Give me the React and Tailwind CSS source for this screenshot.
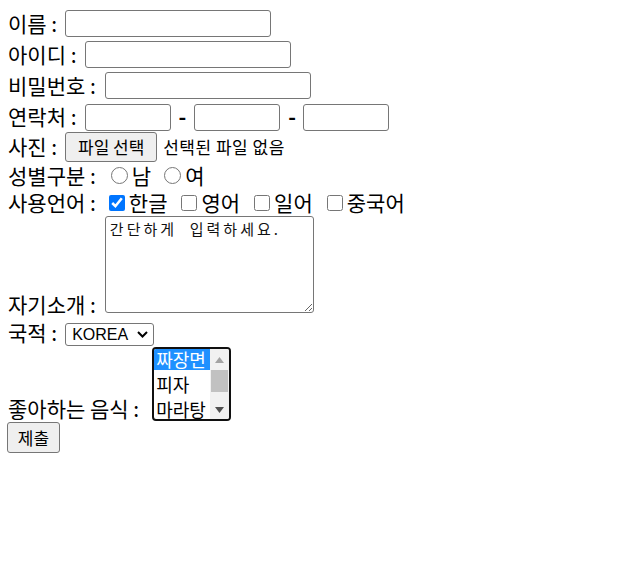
import React from 'react';

const label = { fontFamily: '"Noto Sans CJK KR", sans-serif' };

function TextBox({ className = '' }) {
  return <input type="text" className={`h-[27px] border border-[#767676] rounded-[3px] bg-white px-1 ${className}`} />;
}

function Radio({ name, text, className = '' }) {
  return (
    <span className={`flex items-center ${className}`}>
      <input type="radio" name={name} className="mr-[4px] w-[17px] h-[17px] m-0 shrink-0" />
      <span>{text}</span>
    </span>
  );
}

function Check({ text, checked, className = '' }) {
  return (
    <span className={`flex items-center ${className}`}>
      <input type="checkbox" defaultChecked={checked} className="mr-[4px] w-[16px] h-[16px] m-0 shrink-0" />
      <span>{text}</span>
    </span>
  );
}

function FoodList() {
  const foods = ['짜장면', '피자', '마라탕'];
  return (
    <div className="ml-[13px] w-[79px] h-[74px] border-2 border-[#101010] rounded-[4px] bg-white flex overflow-hidden text-[18px] text-black">
      <div className="flex-1 flex flex-col">
        {foods.map((f, i) => (
          <div key={f} className={`h-[21px] leading-[21px] mb-[4px] pl-[2px] whitespace-nowrap ${i === 0 ? 'bg-[#1e90ff] text-white' : ''}`}>{f}</div>
        ))}
      </div>
      <div className="w-[19px] shrink-0 bg-[#f1f1f1] flex flex-col items-center">
        <div className="h-[21px] flex items-center justify-center">
          <svg width="9" height="6" viewBox="0 0 9 6"><path d="M4.5 0 L9 6 L0 6 Z" fill="#a3a3a3" /></svg>
        </div>
        <div className="w-[17px] h-[22px] bg-[#c1c1c1]" />
        <div className="flex-1 flex items-end justify-center pb-[6px]">
          <svg width="9" height="6" viewBox="0 0 9 6"><path d="M0 0 L9 0 L4.5 6 Z" fill="#505050" /></svg>
        </div>
      </div>
    </div>
  );
}

export default function App() {
  return (
    <form className="pt-2 pl-2 text-[21px] leading-[27px] text-black bg-white w-[628px] h-[573px]" style={label} onSubmit={(e) => e.preventDefault()}>
      <div className="flex items-center h-[31px]">
        <span>이름 :</span>
        <TextBox className="ml-[8px] w-[206px]" />
      </div>
      <div className="flex items-center h-[31px]">
        <span>아이디 :</span>
        <TextBox className="ml-[8px] w-[206px]" />
      </div>
      <div className="flex items-center h-[31px]">
        <span>비밀번호 :</span>
        <TextBox className="ml-[9px] w-[206px]" />
      </div>
      <div className="flex items-start h-[30px]">
        <span className="mt-[2px]">연락처 :</span>
        <TextBox className="ml-[8px] w-[86px] mt-[3px]" />
        <span className="mx-[8px] font-bold mt-[2px]">-</span>
        <TextBox className="w-[86px] mt-[3px]" />
        <span className="ml-[8px] mr-[7px] font-bold mt-[2px]">-</span>
        <TextBox className="w-[86px] mt-[3px]" />
      </div>
      <div className="flex items-center h-[31px]">
        <span>사진 :</span>
        <button type="button" className="ml-[8px] w-[92px] h-[30px] bg-[#efefef] border border-[#767676] rounded-[3px] text-[17px] leading-[20px]">파일 선택</button>
        <span className="ml-[6px] text-[17px] tracking-[0.5px]">선택된 파일 없음</span>
      </div>
      <div className="flex items-center h-[27px]">
        <span>성별구분 :</span>
        <Radio name="gender" text="남" className="ml-[15px]" />
        <Radio name="gender" text="여" className="ml-[13px]" />
      </div>
      <div className="flex items-center h-[27px]">
        <span>사용언어 :</span>
        <Check text="한글" checked className="ml-[13px]" />
        <Check text="영어" className="ml-[14px]" />
        <Check text="일어" className="ml-[14px]" />
        <Check text="중국어" className="ml-[14px]" />
      </div>
      <div className="flex h-[102px]">
        <span className="self-end">자기소개 :</span>
        <textarea
          defaultValue={'간단하게  입력하세요.'}
          className="ml-[9px] w-[209px] h-[97px] border border-[#767676] rounded-[3px] bg-white px-[4px] py-[2px] text-[15px] leading-[19px] tracking-[3px] text-[#111] resize"
        />
      </div>
      <div className="flex items-start h-[29px]">
        <span className="mt-[1px]">국적 :</span>
        <span className="relative flex ml-[8px] mt-[5px]">
          <select className="appearance-none w-[89px] h-[23px] border border-[#767676] rounded-[3px] bg-white pl-[6px] text-[16px] leading-[20px]" style={{ fontFamily: '"Liberation Sans", Arial, sans-serif' }}>
            <option>KOREA</option>
            <option>USA</option>
            <option>JAPAN</option>
          </select>
          <svg className="absolute right-[6px] top-[8px] pointer-events-none" width="11" height="7" viewBox="0 0 11 7">
            <path d="M1 1 L5.5 5.5 L10 1" fill="none" stroke="#000" strokeWidth="2" />
          </svg>
        </span>
      </div>
      <div className="flex h-[75px]">
        <span className="self-end">좋아하는 음식 :</span>
        <FoodList />
      </div>
      <div className="-ml-px">
        <button type="submit" className="w-[53px] h-[31px] bg-[#efefef] border border-[#767676] rounded-[3px] text-[17px]">제출</button>
      </div>
    </form>
  );
}
